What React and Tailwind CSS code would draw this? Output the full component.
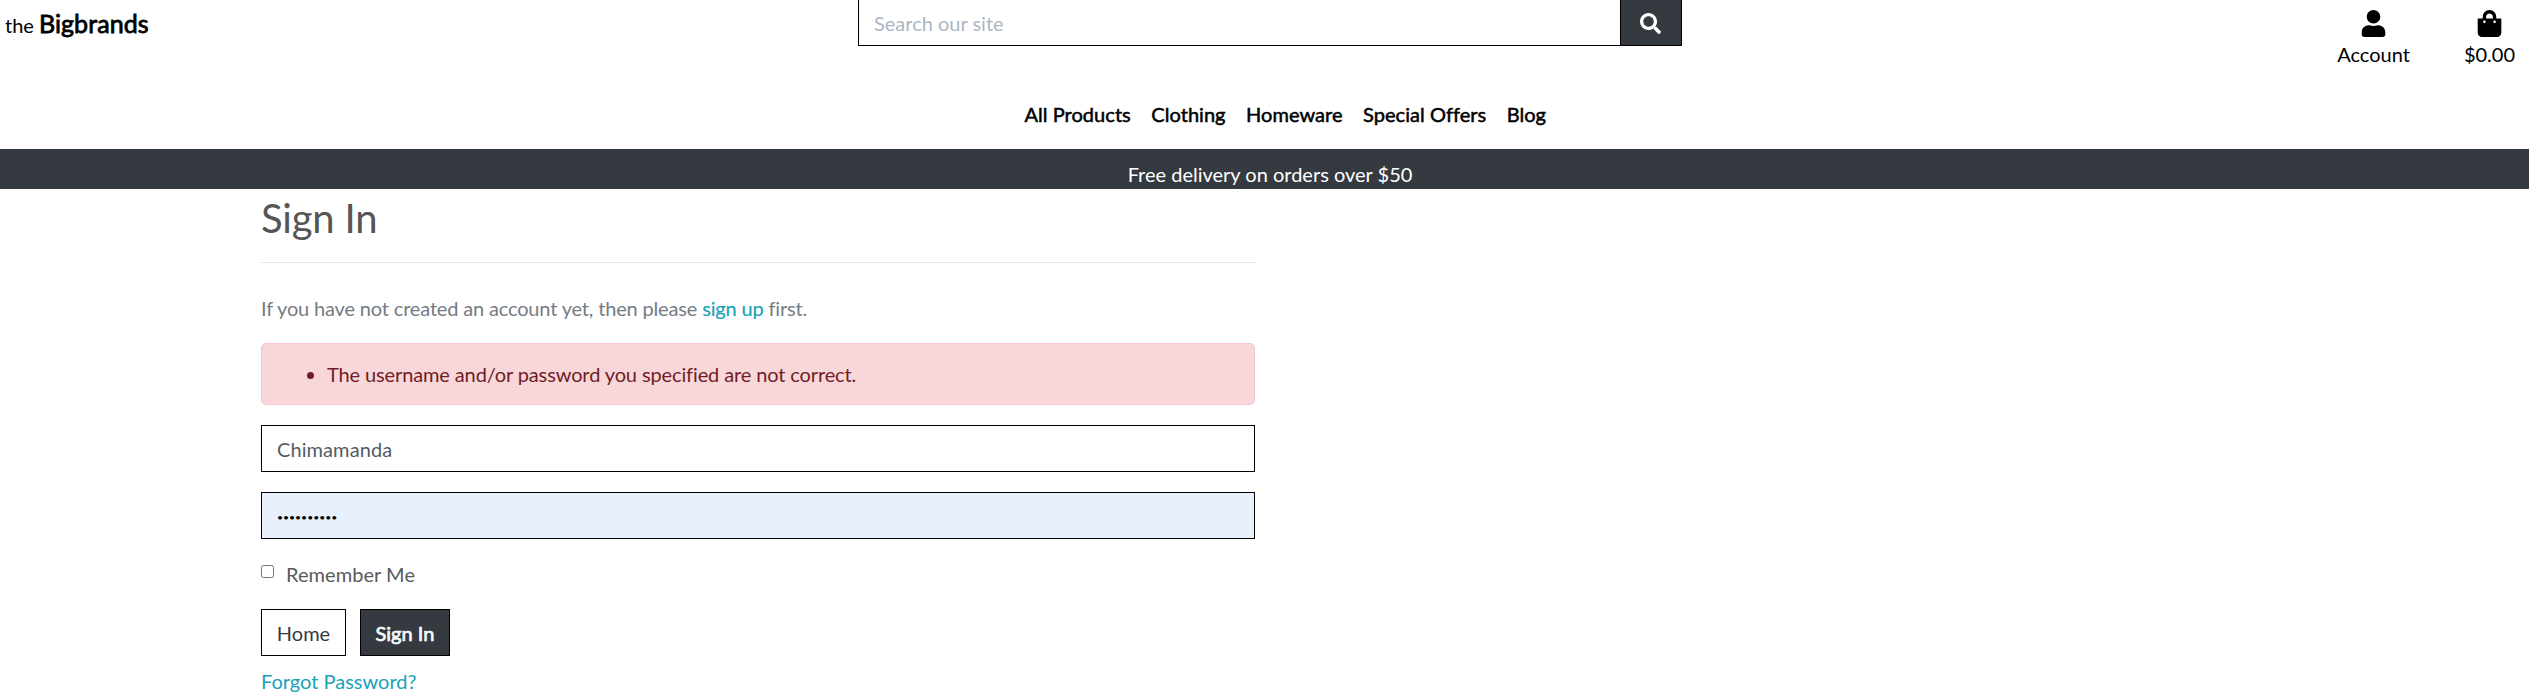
import { FaUser, FaShoppingBag, FaSearch } from "react-icons/fa";

const NAV = ["All Products", "Clothing", "Homeware", "Special Offers", "Blog"];

function Header() {
  return (
    <header className="grid h-[149px] grid-cols-[858px_824px_1fr] grid-rows-[81px_68px] text-black">
      <a href="#" className="flex items-baseline gap-[5px] pt-[5px] pl-[5px] leading-[36px]">
        <span className="text-[20px]">the</span>
        <span className="text-[25px] tracking-[0.1px] [-webkit-text-stroke:0.8px_black]">Bigbrands</span>
      </a>
      <form className="flex h-[46px]">
        <input
          type="text"
          placeholder="Search our site"
          className="h-[46px] w-[762px] border-b border-l border-black pl-[15px] text-[20px] outline-none placeholder:text-[#aab7c4]"
        />
        <button type="button" className="flex h-[46px] w-[62px] justify-center border-x border-b border-black bg-[#343a40] pt-[13px] pr-px text-white">
          <FaSearch size={21} />
        </button>
      </form>
      <div className="flex justify-end pr-[14px] leading-[30px]">
        <a href="#" className="mr-[54px] flex flex-col items-center pt-[10px] text-[20px]">
          <FaUser size={27} />
          <span className="mt-[2px]">Account</span>
        </a>
        <a href="#" className="flex flex-col items-center pt-[10px] text-[20px]">
          <FaShoppingBag size={27} />
          <span className="mt-[2px]">$0.00</span>
        </a>
      </div>
      <nav className="col-span-3 flex gap-[20.5px] pt-[18px] pl-[1024.5px] text-[20px] leading-[30px] tracking-[0.04px] [-webkit-text-stroke:0.5px_black]">
        {NAV.map((item) => (
          <a key={item} href="#">{item}</a>
        ))}
      </nav>
    </header>
  );
}

export default function App() {
  return (
    <div className="h-[699px] overflow-hidden bg-white font-['Lato',sans-serif] text-[20px] leading-[30px] text-[#5a5a5a]">
      <Header />
      <div className="flex h-[40px] justify-center bg-[#343a40] pt-[10px] pl-[11px] text-white">
        Free delivery on orders over $50
      </div>
      <main className="ml-[261px] w-[994px]">
        <h1 className="pt-[5px] text-[40px] leading-[48px] tracking-[-0.2px] text-[#555]">Sign In</h1>
        <hr className="mt-[20px] border-[#e5e5e5]" />
        <p className="mt-[30px] tracking-[-0.165px] text-[#747c84]">
          If you have not created an account yet, then please{" "}
          <a href="#" className="text-[#17a2b8] [-webkit-text-stroke:0.15px_#17a2b8]">sign up</a> first.
        </p>
        <div className="mt-[20px] flex h-[62px] items-center rounded-[5px] border border-[#f5c6cb] bg-[#f8d7da] text-[#721c24]">
          <ul className="list-disc pl-[65px] tracking-[-0.12px]">
            <li>The username and/or password you specified are not correct.</li>
          </ul>
        </div>
        <form>
          <input
            type="text"
            defaultValue="Chimamanda"
            className="mt-[20px] block h-[47px] w-full border border-black pl-[15px] tracking-[0.08px] text-[#555c63] outline-none"
          />
          <input
            type="password"
            defaultValue="brandsbigs"
            className="mt-[20px] block h-[47px] w-full border border-black bg-[#e8f0fe] pt-[3px] pl-[15px] text-[10.4px] text-black outline-none"
          />
          <label className="mt-[20px] flex h-[30px] tracking-[0.05px]">
            <input type="checkbox" className="mt-[6px] mr-[12px] size-[13px]" />
            Remember Me
          </label>
          <div className="mt-[20px] flex gap-[14px]">
            <a href="#" className="flex h-[47px] w-[85px] items-center justify-center border border-black text-[#343a40]">Home</a>
            <button type="button" className="flex h-[47px] w-[90px] items-center justify-center border border-black bg-[#343a40] text-[#f8f9fa] [-webkit-text-stroke:0.7px_#f8f9fa]">Sign In</button>
          </div>
          <a href="#" className="mt-[10px] block text-[#17a2b8]">Forgot Password?</a>
        </form>
      </main>
    </div>
  );
}
